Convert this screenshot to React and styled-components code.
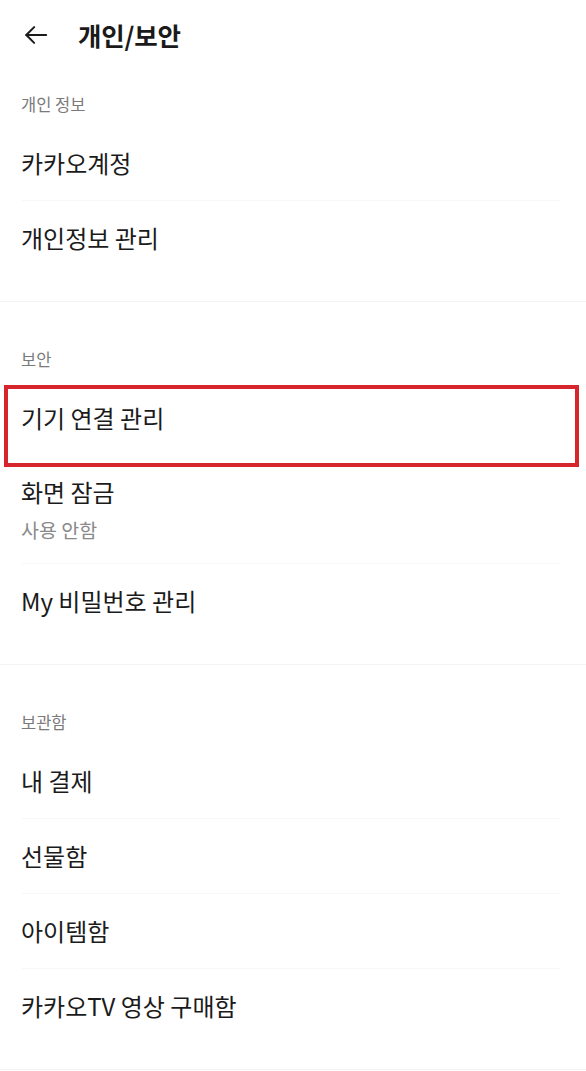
import React from "react";
import styled, { createGlobalStyle } from "styled-components";

const Global = createGlobalStyle`
  html, body { margin: 0; padding: 0; background: #ffffff; }
  body { font-family: "Noto Sans CJK KR", "Noto Sans", sans-serif; -webkit-font-smoothing: antialiased; }
  * { box-sizing: border-box; }
`;

const Page = styled.div`
  width: 586px;
  background: #fff;
  color: #1b1b1b;
`;

const Header = styled.header`
  height: 70px;
  display: flex;
  align-items: center;
  padding: 0 0 0 24px;
  gap: 30px;
`;

const BackButton = styled.button`
  width: 24px;
  height: 24px;
  padding: 0;
  border: 0;
  background: none;
  display: flex;
  align-items: center;
  justify-content: center;
  color: #1b1b1b;
`;

const Title = styled.h1`
  margin: 0;
  font-size: 25.5px;
  font-weight: 700;
  line-height: 30px;
  color: #1a1a1a;
  letter-spacing: -0.2px;
`;

const Section = styled.section`
  padding: ${(p) => (p.$first ? "0" : "23px")} 0 26px;
  border-bottom: 1px solid #f3f3f3;
`;

const SectionLabel = styled.div`
  padding: 24px 21px 12px;
  font-size: 16.5px;
  line-height: 20px;
  color: #7a7a7a;
`;

const Row = styled.div`
  position: relative;
  display: flex;
  flex-direction: column;
  justify-content: center;
  min-height: 74px;
  padding: ${(p) => (p.$sub ? "21px 21px 22px" : "0 21px")};
  ${(p) =>
    p.$highlight &&
    `
    &::after {
      content: "";
      position: absolute;
      top: 4px;
      left: 4px;
      right: 7px;
      bottom: -12px;
      border: 4px solid #d7252e;
      pointer-events: none;
      z-index: 2;
    }
  `}
`;

const Divider = styled.div`
  height: 1px;
  margin: 0 26px 0 22px;
  background: ${(p) => (p.$hidden ? "transparent" : "#f7f7f7")};
`;

const RowTitle = styled.div`
  font-size: 24px;
  line-height: 30px;
  color: #1b1b1b;
`;

const RowSub = styled.div`
  margin-top: 11px;
  font-size: 19.5px;
  line-height: 23px;
  color: #8a8a8a;
`;

const ArrowIcon = () => (
  <svg width="26" height="24" viewBox="0 0 26 24" fill="none" stroke="currentColor" strokeWidth="2.2" strokeLinecap="round" strokeLinejoin="round">
    <path d="M24 12H2.5" />
    <path d="M11 3.5L2.5 12L11 20.5" />
  </svg>
);

const sections = [
  {
    label: "개인 정보",
    rows: [{ title: "카카오계정" }, { title: "개인정보 관리" }],
  },
  {
    label: "보안",
    rows: [
      { title: "기기 연결 관리", highlight: true },
      { title: "화면 잠금", sub: "사용 안함" },
      { title: "My 비밀번호 관리" },
    ],
  },
  {
    label: "보관함",
    rows: [
      { title: "내 결제" },
      { title: "선물함" },
      { title: "아이템함" },
      { title: "카카오TV 영상 구매함" },
    ],
  },
];

export default function App() {
  return (
    <Page>
      <Global />
      <Header>
        <BackButton aria-label="뒤로">
          <ArrowIcon />
        </BackButton>
        <Title>개인/보안</Title>
      </Header>
      {sections.map((s, i) => (
        <Section key={s.label} $first={i === 0}>
          <SectionLabel>{s.label}</SectionLabel>
          {s.rows.map((r, j) => (
            <React.Fragment key={r.title}>
              {j > 0 && <Divider $hidden={s.rows[j - 1].highlight} />}
              <Row $sub={!!r.sub} $highlight={r.highlight}>
                <RowTitle>{r.title}</RowTitle>
                {r.sub && <RowSub>{r.sub}</RowSub>}
              </Row>
            </React.Fragment>
          ))}
        </Section>
      ))}
    </Page>
  );
}
